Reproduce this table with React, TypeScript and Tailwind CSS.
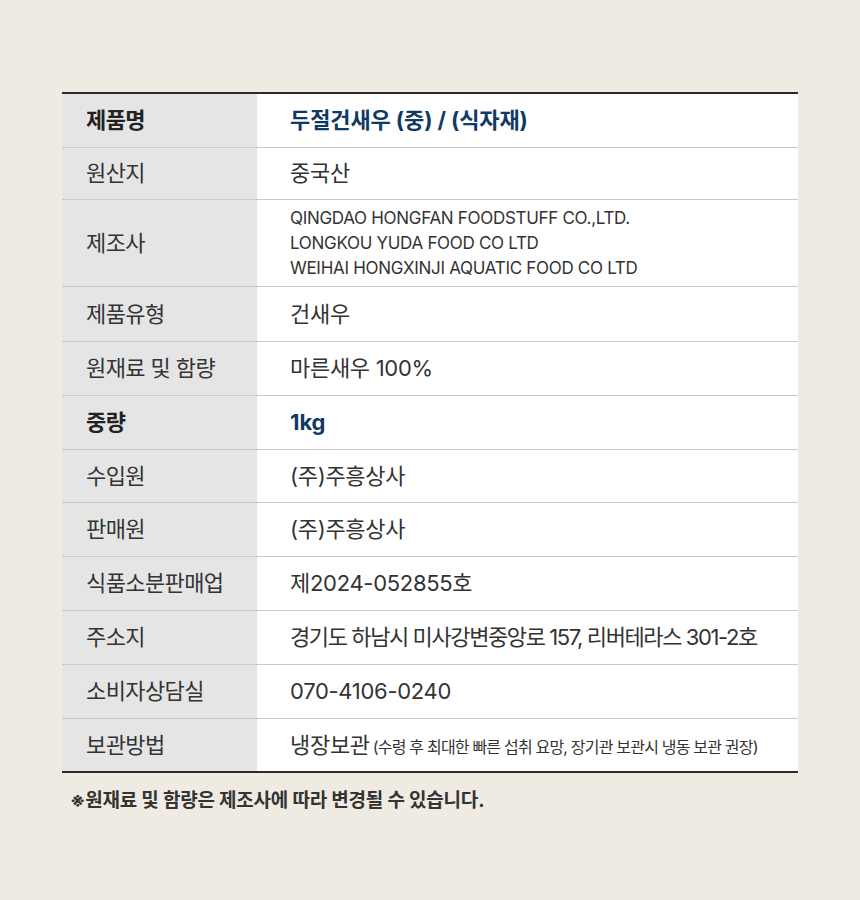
import React from "react";

type Row = {
  label: string;
  value: React.ReactNode;
  bold?: boolean;
  h: string;
  tight?: boolean;
};

const rows: Row[] = [
  { label: "제품명", value: "두절건새우 (중) / (식자재)", bold: true, h: "h-[53px]" },
  { label: "원산지", value: "중국산", h: "h-[52px]" },
  {
    label: "제조사",
    value: (
      <div className="text-[17px] leading-[25px] tracking-[-0.3px]">
        <div>QINGDAO HONGFAN FOODSTUFF CO.,LTD.</div>
        <div>LONGKOU YUDA FOOD CO LTD</div>
        <div>WEIHAI HONGXINJI AQUATIC FOOD CO LTD</div>
      </div>
    ),
    h: "h-[87px]",
  },
  { label: "제품유형", value: "건새우", h: "h-[55px]" },
  { label: "원재료 및 함량", value: "마른새우 100%", h: "h-[54px]" },
  { label: "중량", value: "1kg", bold: true, h: "h-[54px]" },
  { label: "수입원", value: "(주)주흥상사", h: "h-[53px]" },
  { label: "판매원", value: "(주)주흥상사", h: "h-[54px]" },
  { label: "식품소분판매업", value: "제2024-052855호", h: "h-[54px]" },
  {
    label: "주소지",
    value: "경기도 하남시 미사강변중앙로 157, 리버테라스 301-2호",
    h: "h-[54px]",
    tight: true,
  },
  { label: "소비자상담실", value: "070-4106-0240", h: "h-[54px]" },
  {
    label: "보관방법",
    value: (
      <span>
        냉장보관
        <span className="text-[16px] tracking-[-0.8px] ml-[3px]">
          (수령 후 최대한 빠른 섭취 요망, 장기관 보관시 냉동 보관 권장)
        </span>
      </span>
    ),
    h: "h-[53px]",
  },
];

export default function App() {
  return (
    <div
      className="w-[860px] h-[900px] bg-[#efebe2] pt-[92px] px-[62px]"
      style={{ fontFamily: 'Inter, "Noto Sans CJK KR", sans-serif' }}
    >
      <div className="border-t-2 border-b-2 border-[#2b2b2b]">
        {rows.map((r, i) => (
          <div
            key={r.label}
            className={`flex ${r.h} ${i > 0 ? "border-t border-[#c9c9c9]" : ""}`}
          >
            <div
              className={`w-[195px] shrink-0 bg-[#e5e5e5] flex items-center pl-[24px] text-[22px] tracking-[-0.6px] ${
                r.bold ? "font-bold text-[#222]" : "text-[#333]"
              }`}
            >
              {r.label}
            </div>
            <div
              className={`flex-1 bg-white flex items-center pl-[33px] text-[22px] ${
                r.tight ? "tracking-[-1.4px]" : r.bold ? "tracking-[-0.1px]" : "tracking-[-0.3px]"
              } ${r.bold ? "font-bold text-[#0f3a66]" : "text-[#333]"}`}
            >
              {r.value}
            </div>
          </div>
        ))}
      </div>
      <div className="pl-[8px] pt-[14px] text-[19px] font-bold tracking-[-0.2px] text-[#333]">
        ※원재료 및 함량은 제조사에 따라 변경될 수 있습니다.
      </div>
    </div>
  );
}
